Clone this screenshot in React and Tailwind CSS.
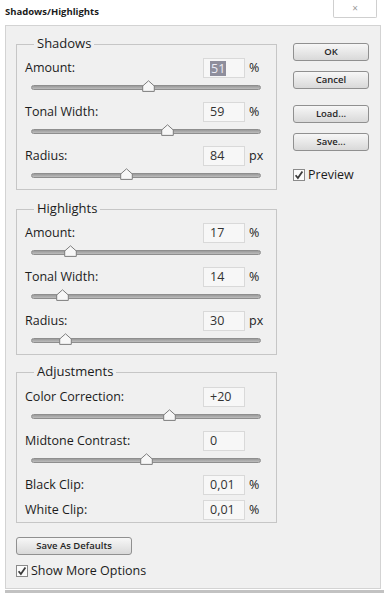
import React from "react";

const Thumb = () => (
  <svg width="13" height="12" viewBox="0 0 13 12">
    <path
      d="M6.5 0.8 L12.3 6 L12.3 11.4 L0.7 11.4 L0.7 6 Z"
      fill="#f7f7f7"
      stroke="#7d7d7d"
      strokeWidth="1"
      strokeLinejoin="round"
    />
  </svg>
);

const Check = () => (
  <svg width="12" height="12" viewBox="0 0 12 12">
    <rect x="0.5" y="0.5" width="11" height="11" fill="#fbfbfb" stroke="#8a8a8a" />
    <path d="M2.6 6.2 L4.9 9 L9.4 2.6" fill="none" stroke="#3b3b3b" strokeWidth="1.8" />
  </svg>
);

const Field = ({ label, value, unit, selected }) => {
  return (
    <div className="flex items-center h-[20px] pl-[8px]">
      <span className="w-[178px] text-[12.5px] text-[#1c1c1c]">{label}</span>
      <div className="w-[42px] h-[20px] border border-[#d9d9d9] bg-[#f7f7f7] flex items-center pl-[6px] text-[12.5px] text-[#333]">
        {selected ? (
          <span className="bg-[#8e8e9c] text-[#ececf4] px-[1px] leading-[15px]">{value}</span>
        ) : (
          value
        )}
      </div>
      <span className="ml-[4px] text-[12.5px] text-[#1c1c1c]">{unit}</span>
    </div>
  );
};

const Slider = ({ pos }) => {
  return (
    <div className="relative h-[24px] pt-[7px] ml-[14px] w-[230px]">
      <div className="h-[5px] rounded-full border border-[#8e8e8e] bg-linear-to-b from-[#9a9a9a] to-[#bdbdbd]" />
      {/* thumb sits over the track */}
      <div className="absolute top-[2px]" style={{ left: pos - 6 }}>
        <Thumb />
      </div>
    </div>
  );
};

const Group = ({ title, className, children }) => {
  return (
    <div className={`relative border border-[#c6c6c6] w-[261px] ${className}`}>
      <span className="absolute -top-[11px] left-[17px] px-[3px] bg-[#f0f0f0] text-[13px] leading-[18px] text-[#1c1c1c]">
        {title}
      </span>
      {children}
    </div>
  );
};

const Button = ({ children, className = "" }) => (
  <button
    className={`h-[18px] rounded-[3px] border border-[#909090] bg-linear-to-b from-[#f7f7f7] to-[#d9d9d9] text-[9.5px] font-semibold text-[#262626] leading-none ${className}`}
  >
    {children}
  </button>
);

export default function App() {
  return (
    <div className="w-[384px] h-[593px] bg-white overflow-hidden font-['Open_Sans',sans-serif]">
      {/* title bar */}
      <div className="h-[25px] flex items-start justify-between">
        <span className="ml-[5px] mt-[5px] text-[9.5px] font-bold leading-[14px] text-[#1a1a1a]">
          Shadows/Highlights
        </span>
        <div className="mr-[7px] w-[44px] h-[18px] border border-t-0 border-[#cfcfcf] rounded-b-[2px] flex items-center justify-center text-[10px] text-[#9a9a9a]">
          ×
        </div>
      </div>

      {/* dialog body */}
      <div className="ml-[5px] w-[376px] h-[564px] border border-[#d3d3d3] bg-[#f0f0f0] flex">
        <div className="pl-[10px] pt-[18px]">
          <Group title="Shadows" className="h-[146px] pt-[13px]">
            <Field label="Amount:" value="51" unit="%" selected />
            <Slider pos={117} />
            <Field label="Tonal Width:" value="59" unit="%" />
            <Slider pos={136} />
            <Field label="Radius:" value="84" unit="px" />
            <Slider pos={95} />
          </Group>

          <Group title="Highlights" className="h-[146px] mt-[19px] pt-[13px]">
            <Field label="Amount:" value="17" unit="%" />
            <Slider pos={39} />
            <Field label="Tonal Width:" value="14" unit="%" />
            <Slider pos={31} />
            <Field label="Radius:" value="30" unit="px" />
            <Slider pos={34} />
          </Group>

          <Group title="Adjustments" className="h-[151px] mt-[17px] pt-[14px]">
            <Field label="Color Correction:" value="+20" unit="" />
            <Slider pos={138} />
            <Field label="Midtone Contrast:" value="0" unit="" />
            <Slider pos={115} />
            <Field label="Black Clip:" value="0,01" unit="%" />
            <div className="mt-[5px]">
              <Field label="White Clip:" value="0,01" unit="%" />
            </div>
          </Group>

          <Button className="mt-[14px] w-[116px]">Save As Defaults</Button>

          <div className="mt-[9px] h-[14px] flex items-center gap-[3px]">
            <Check />
            <span className="text-[12.5px] text-[#1c1c1c]">Show More Options</span>
          </div>
        </div>

        <div className="ml-[16px] pt-[17px] flex flex-col w-[76px]">
          <Button>OK</Button>
          <Button className="mt-[10px]">Cancel</Button>
          <Button className="mt-[16px]">Load...</Button>
          <Button className="mt-[10px]">Save...</Button>
          <div className="mt-[17px] h-[14px] flex items-center gap-[3px]">
            <Check />
            <span className="text-[12.5px] text-[#1c1c1c]">Preview</span>
          </div>
        </div>
      </div>

      <div className="ml-[5px] mt-[1px] h-[3px] bg-[#c2c2c2]" />
    </div>
  );
}
